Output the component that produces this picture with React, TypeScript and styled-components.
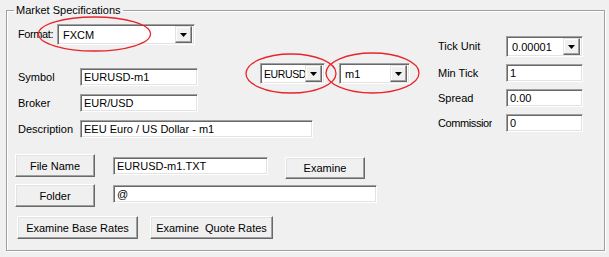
import React from "react";
import styled, { createGlobalStyle } from "styled-components";

const GlobalStyle = createGlobalStyle`
  html, body {
    margin: 0;
    padding: 0;
    background: #f0f0f0;
  }
  body {
    font-family: "Liberation Sans", Arial, sans-serif;
    font-size: 11px;
    color: #000;
  }
`;

const Page = styled.div`
  position: relative;
  width: 609px;
  height: 257px;
  overflow: hidden;
  padding-left: 6px;
  padding-top: 4px;
  box-sizing: border-box;
`;

const Group = styled.fieldset`
  margin: 0;
  padding: 0;
  width: 599px;
  height: 247px;
  box-sizing: border-box;
  border: 1px solid #a0a0a0;
  box-shadow: 1px 1px 0 #ffffff, inset 1px 1px 0 #ffffff;
`;

const Legend = styled.legend`
  margin-left: 7px;
  padding: 0 2px;
  line-height: 13px;
  font-size: 11px;
`;

const Body = styled.div`
  display: flex;
  padding: 7px 0 0 8px;
`;

const LeftPane = styled.div`
  display: flex;
  flex-direction: column;
  width: 423px;
`;

const RightPane = styled.div`
  display: flex;
  flex-direction: column;
  gap: 7px;
  margin-top: 12px;
`;

const Row = styled.div<{ $top?: number }>`
  display: flex;
  align-items: flex-start;
  margin-top: ${(p) => p.$top ?? 0}px;
`;

const Label = styled.div<{ $w: number; $clip?: number; $indent?: number; $h?: number; $top?: number; $tight?: boolean }>`
  width: ${(p) => p.$clip ?? p.$w - (p.$indent ?? 3)}px;
  margin-right: ${(p) => (p.$clip ? p.$w - p.$clip - (p.$indent ?? 3) : 0)}px;
  margin-left: ${(p) => p.$indent ?? 3}px;
  margin-top: ${(p) => p.$top ?? 0}px;
  height: ${(p) => p.$h ?? 21}px;
  line-height: ${(p) => p.$h ?? 21}px;
  letter-spacing: ${(p) => (p.$tight ? "-0.4px" : "normal")};
  white-space: nowrap;
  overflow: hidden;
`;

const Input = styled.div<{ $w: number; $h?: number; $left?: number; $top?: number }>`
  width: ${(p) => p.$w}px;
  height: ${(p) => p.$h ?? 18}px;
  margin-left: ${(p) => p.$left ?? 0}px;
  margin-top: ${(p) => p.$top ?? 0}px;
  box-sizing: border-box;
  background: #ffffff;
  border: 1px solid;
  border-color: #a0a0a0 #ffffff #ffffff #a0a0a0;
  box-shadow: inset 1px 1px 0 #696969, inset -1px -1px 0 #e3e3e3;
  padding-left: 3px;
  display: flex;
  align-items: center;
  white-space: nowrap;
  overflow: hidden;
`;

const ComboBox = styled.div<{ $w: number; $left?: number }>`
  width: ${(p) => p.$w}px;
  height: 21px;
  margin-left: ${(p) => p.$left ?? 0}px;
  box-sizing: border-box;
  background: #ffffff;
  border: 1px solid;
  border-color: #a0a0a0 #ffffff #ffffff #a0a0a0;
  box-shadow: inset 1px 1px 0 #696969, inset -1px -1px 0 #e3e3e3;
  display: flex;
  align-items: center;
  padding: 2px;
`;

const ComboText = styled.div<{ $tight?: boolean }>`
  flex: 1;
  padding-left: ${(p) => (p.$tight ? 1 : 3)}px;
  font-size: ${(p) => (p.$tight ? 10.5 : 11)}px;
  letter-spacing: ${(p) => (p.$tight ? "-0.4px" : "normal")};
  white-space: nowrap;
  overflow: hidden;
`;

const ArrowButton = styled.div`
  width: 17px;
  height: 17px;
  flex-shrink: 0;
  box-sizing: border-box;
  background: #f0f0f0;
  border: 1px solid;
  border-color: #e3e3e3 #696969 #696969 #e3e3e3;
  box-shadow: inset -1px -1px 0 #a0a0a0, inset 1px 1px 0 #ffffff;
  display: flex;
  align-items: center;
  justify-content: center;
`;

const Button = styled.div<{ $w: number; $h?: number; $left?: number; $top?: number }>`
  width: ${(p) => p.$w}px;
  height: ${(p) => p.$h ?? 23}px;
  margin-left: ${(p) => p.$left ?? 0}px;
  margin-top: ${(p) => p.$top ?? 0}px;
  box-sizing: border-box;
  background: #f0f0f0;
  border: 1px solid;
  border-color: #ffffff #696969 #696969 #ffffff;
  box-shadow: inset -1px -1px 0 #a0a0a0, inset 1px 1px 0 #e3e3e3;
  display: flex;
  align-items: center;
  justify-content: center;
  white-space: pre;
`;

const Marks = styled.svg`
  position: absolute;
  left: 0;
  top: 0;
  pointer-events: none;
`;

const Combo = ({
  w,
  left,
  value,
  tight,
}: {
  w: number;
  left?: number;
  value: string;
  tight?: boolean;
}) => (
  <ComboBox $w={w} $left={left}>
    <ComboText $tight={tight}>{value}</ComboText>
    <ArrowButton>
      <svg width="7" height="4" viewBox="0 0 7 4">
        <path d="M0 0H7L3.5 4Z" fill="#000" />
      </svg>
    </ArrowButton>
  </ComboBox>
);

export default function App() {
  return (
    <Page>
      <GlobalStyle />
      <Group>
        <Legend>Market Specifications</Legend>
        <Body>
          <LeftPane>
            <Row>
              <Label $w={42} $tight>Format:</Label>
              <Combo w={138} value="FXCM" />
            </Row>
            <Row $top={18}>
              <Label $w={65} $h={18} $top={5}>Symbol</Label>
              <Input $w={118} $top={5}>EURUSD-m1</Input>
              <Combo w={65} left={62} value="EURUSD" tight />
              <Combo w={71} left={14} value="m1" />
            </Row>
            <Row $top={8}>
              <Label $w={65} $h={18}>Broker</Label>
              <Input $w={118}>EUR/USD</Input>
            </Row>
            <Row $top={8}>
              <Label $w={65} $h={18}>Description</Label>
              <Input $w={233}>EEU Euro / US Dollar - m1</Input>
            </Row>
            <Row $top={16}>
              <Button $w={80}>File Name</Button>
              <Input $w={155} $left={18} $top={3}>EURUSD-m1.TXT</Input>
              <Button $w={80} $h={22} $left={17} $top={3}>Examine</Button>
            </Row>
            <Row $top={5}>
              <Button $w={80}>Folder</Button>
              <Input $w={264} $left={18} $top={1}>@</Input>
            </Row>
            <Row $top={9}>
              <Button $w={121} $left={2}>Examine Base Rates</Button>
              <Button $w={123} $left={12}>Examine  Quote Rates</Button>
            </Row>
          </LeftPane>
          <RightPane>
            <Row>
              <Label $w={68} $clip={54} $indent={0}>Tick Unit</Label>
              <Combo w={77} value="0.00001" />
            </Row>
            <Row>
              <Label $w={68} $clip={54} $indent={0} $h={18}>Min Tick</Label>
              <Input $w={77}>1</Input>
            </Row>
            <Row>
              <Label $w={68} $clip={54} $indent={0} $h={18}>Spread</Label>
              <Input $w={77}>0.00</Input>
            </Row>
            <Row>
              <Label $w={68} $clip={54} $indent={0} $h={18} $tight>Commission</Label>
              <Input $w={77}>0</Input>
            </Row>
          </RightPane>
        </Body>
      </Group>
      <Marks width="609" height="257" viewBox="0 0 609 257">
        <g fill="none" stroke="#e8252a" strokeWidth="1.3">
          <ellipse cx="94.5" cy="34" rx="56" ry="17" />
          <ellipse cx="291" cy="73.5" rx="45" ry="19.5" />
          <ellipse cx="372.5" cy="73" rx="46.5" ry="20" />
        </g>
      </Marks>
    </Page>
  );
}
